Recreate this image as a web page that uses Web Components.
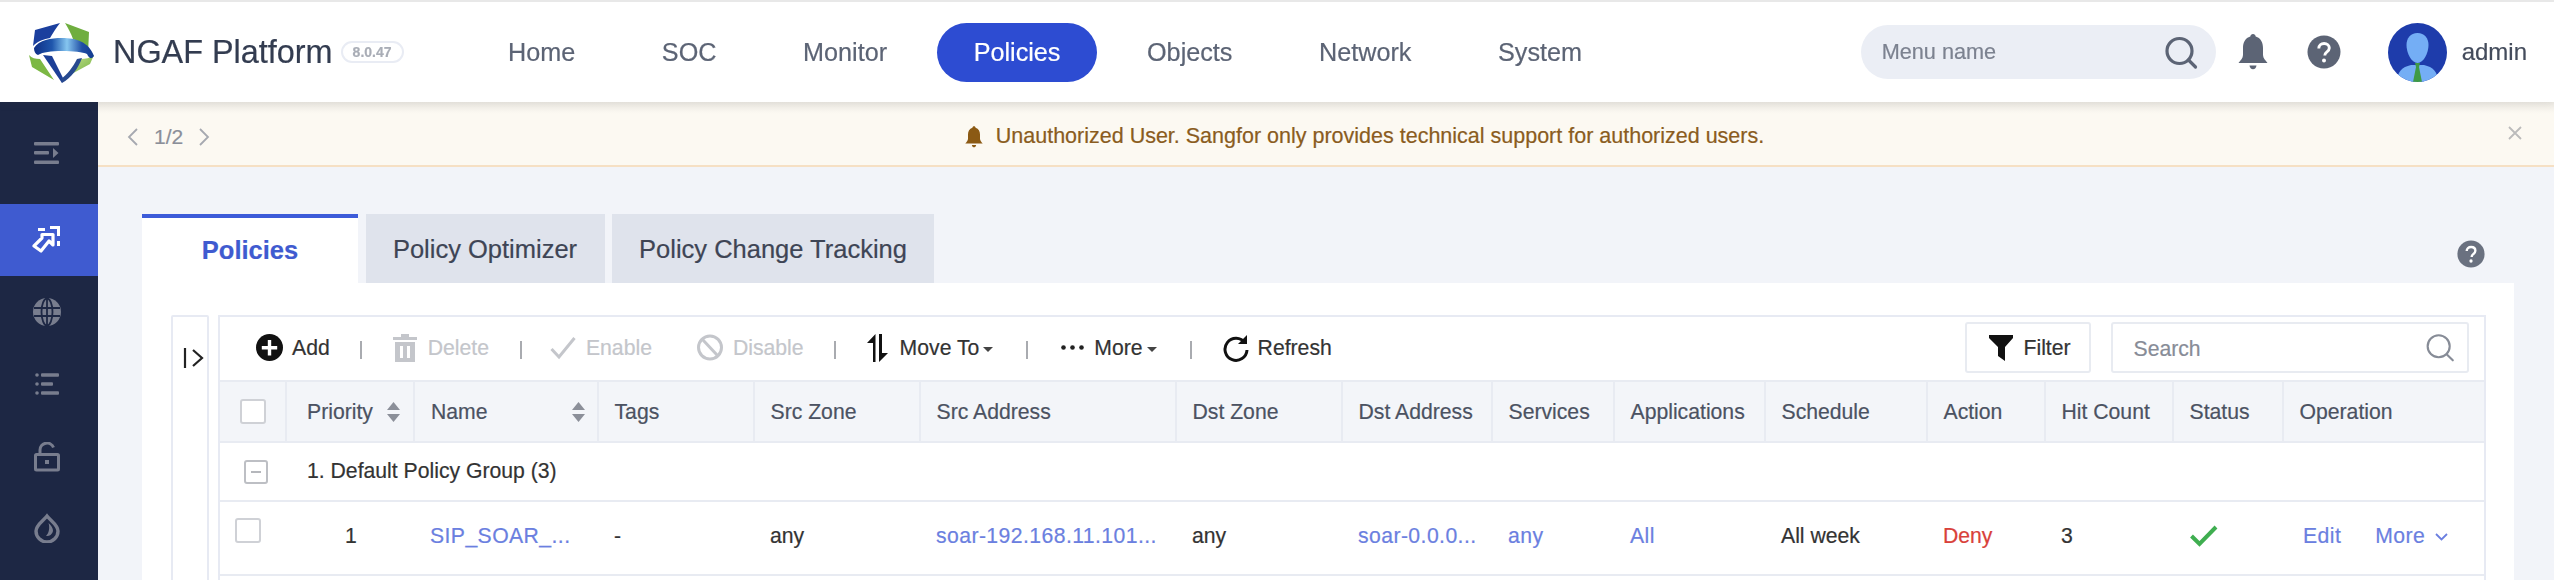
<!DOCTYPE html>
<html lang="en">
<head>
<meta charset="utf-8">
<title>NGAF Platform</title>
<style>
  html, body { margin: 0; height: 580px; overflow: hidden; background: #f2f4f9; }
  body { font-family: "Liberation Sans", Arial, sans-serif; color: #333; -webkit-text-stroke: .2px; }
  app-shell { height: 580px; filter: blur(.55px); }
</style>
</head>
<body>
<app-shell>
  <ngaf-header slot="top"></ngaf-header>
  <ngaf-sidebar slot="side"></ngaf-sidebar>
  <notice-bar>Unauthorized User. Sangfor only provides technical support for authorized users.</notice-bar>
  <tab-strip>
    <tab-item active>Policies</tab-item>
    <tab-item style="width:239px">Policy Optimizer</tab-item>
    <tab-item style="width:322px">Policy Change Tracking</tab-item>
  </tab-strip>
  <policy-panel>
    <policy-toolbar></policy-toolbar>
    <policy-table></policy-table>
  </policy-panel>
</app-shell>

<script>
// iconos compartidos
const icons = {
  search: (c, w) => `<svg width="34" height="34" viewBox="0 0 34 34" fill="none" stroke="${c}" stroke-width="${w}"><circle cx="15.5" cy="15" r="12.5"/><path d="M24.5 24l7 7" stroke-linecap="round"/></svg>`,
  help: (s, bg) => `<svg width="${s}" height="${s}" viewBox="0 0 34 34"><circle cx="17" cy="17" r="16.5" fill="${bg}"/><path d="M11.8 13.4c0-3 2.3-4.9 5.3-4.9s5.2 1.8 5.2 4.5c0 2-1.100 3.100-2.600 4.200-1.300 1-1.900 1.600-1.900 3.300" fill="none" stroke="#fff" stroke-width="2.900"/><circle cx="17" cy="25.500" r="2" fill="#fff"/></svg>`,
  bell: (w, h, c) => `<svg width="${w}" height="${h}" viewBox="0 0 30 36"><path fill="${c}" d="M15 0c1.500 0 2.500 1 2.700 2.600C22.600 4 25 8.500 25 14v7c0 3 2.500 5.500 4.500 8H.5c2-2.500 4.500-5 4.500-8v-7C5 8.500 7.400 4 12.300 2.600 12.500 1 13.500 0 15 0z"/><path fill="${c}" d="M11.500 31.500h7c-.3 2.300-1.600 3.800-3.500 3.800s-3.200-1.500-3.500-3.800z"/></svg>`
};

const shellTpl = document.createElement('template');
shellTpl.innerHTML = `
<style>
  :host { display: grid; grid-template-columns: 98px 1fr; grid-template-rows: 102px 1fr; }
  .top { grid-column: 1 / 3; position: relative; z-index: 2; }
  main { display: flex; flex-direction: column; min-width: 0; height: 478px; overflow: hidden; }
</style>
<div class="top"><slot name="top"></slot></div>
<slot name="side"></slot>
<main><slot></slot></main>`;
class AppShell extends HTMLElement {
  constructor() {
    super();
    this.attachShadow({ mode: 'open' }).appendChild(shellTpl.content.cloneNode(true));
  }
}

const headerTpl = document.createElement('template');
headerTpl.innerHTML = `
<style>
  :host { display: flex; align-items: center; box-sizing: border-box; height: 102px; background: #fff; border-top: 2px solid #e8e8e8; padding-left: 29px; box-shadow: 0 2px 8px rgba(60,60,50,.10); }
  .logo { width: 66px; height: 62px; margin-top: 2px; flex: none; }
  .brand { font-size: 32.400px; color: #333c50; margin-left: 18px; white-space: nowrap; }
  .ver { box-sizing: border-box; height: 22px; width: 63px; margin: 0 0 0 8px; border: 2px solid #e9ecf4; border-radius: 11px; font-size: 14px; line-height: 18px; font-weight: bold; color: #a9adb6; text-align: center; flex: none; }
  nav { display: flex; gap: 13.600px; margin-left: 68px; }
  nav a { height: 59px; line-height: 58px; padding: 0 36.5px; border-radius: 30px; font-size: 25.200px; color: #5c6475; white-space: nowrap; }
  nav a.on { background: #2d4cd2; color: #fff; }
  .find { box-sizing: border-box; display: flex; align-items: center; justify-content: space-between; width: 355px; height: 54px; margin-left: auto; padding: 0 18px 0 21px; border-radius: 27px; background: #ebeef5; font-size: 21.700px; color: #7c8290; }
  .find svg { margin-top: 2px; }
  .bell { margin-left: 22px; width: 30px; height: 36px; }
  .help { margin-left: 39px; width: 34px; height: 34px; }
  svg { display: block; }
  .avatar { margin-left: 47px; width: 59px; height: 59px; }
  .user { margin: 0 27px 0 15px; font-size: 24px; color: #444c5c; }
</style>
<svg class="logo" viewBox="0 0 66 62">
  <defs>
    <linearGradient id="band" x1="0" x2="1" y1="0" y2="0"><stop offset="0" stop-color="#0f2f86"/><stop offset=".3" stop-color="#1f56ac"/><stop offset=".55" stop-color="#86c6f0"/><stop offset=".8" stop-color="#1f4ea5"/><stop offset="1" stop-color="#123a90"/></linearGradient>
    <linearGradient id="lg" x1="0" x2="1" y1="0" y2="1"><stop offset="0" stop-color="#cfe69a"/><stop offset="1" stop-color="#6aad36"/></linearGradient>
  </defs>
  <path fill="#1b3f9e" d="M31 1 6 8 4 24c5-5 11-7 17-8 3-5 6-10 10-15z"/>
  <path fill="#6fae3f" d="M36 1l24 9-1 22c-3-7-9-12-15-15-2-6-5-11-8-16z"/>
  <path fill="#7cb844" d="M0 33l3 12 22 13L11 37c-5 0-8-1-11-4z"/>
  <path fill="url(#lg)" d="M37 55l24-13 4-9c-4 3-9 4-13 4-3 7-8 13-15 18z"/>
  <path fill="#1c3f96" d="M14 33l19 28 1-5-11-22z"/>
  <path fill="#27498f" d="M33 61l-1-4c6-4 12-12 16-20l5-1c-4 11-11 20-20 25z"/>
  <path fill="url(#band)" d="M5 26C10 18 22 16 33 16c14 0 27 4 32 18-3 4-5 2-7-2-4-2-14-3-25-3s-19 1-24 4c-3-1-4-4-4-7z"/>
</svg>
<span class="brand">NGAF Platform</span>
<span class="ver">8.0.47</span>
<nav><a>Home</a><a>SOC</a><a>Monitor</a><a class="on">Policies</a><a>Objects</a><a>Network</a><a>System</a></nav>
<div class="find"><span>Menu name</span>${icons.search('#5c6475', 3.2)}</div>
<div class="bell">${icons.bell(30, 36, '#5c6475')}</div>
<div class="help">${icons.help(34, '#5c6475')}</div>
<svg class="avatar" viewBox="0 0 59 59">
  <clipPath id="av"><circle cx="29.500" cy="29.500" r="29.500"/></clipPath>
  <g clip-path="url(#av)">
    <rect width="59" height="59" fill="#1e3cab"/>
    <path fill="#74aef5" d="M9 59c0-10 5-15 14-17h13c9 2 14 7 14 17z"/>
    <path fill="#74aef5" d="M29.500 10c7 0 11 5 11 12 0 8-5 18-11 18s-11-10-11-18c0-7 4-12 11-12z"/>
    <path fill="#3f9a45" d="M27 40h5l-1 4 3 15h-9l3-15z"/>
  </g>
</svg>
<span class="user">admin</span>`;
class NgafHeader extends HTMLElement {
  constructor() {
    super();
    this.attachShadow({ mode: 'open' }).appendChild(headerTpl.content.cloneNode(true));
  }
}

const sideTpl = document.createElement('template');
sideTpl.innerHTML = `
<style>
  :host { display: block; width: 98px; height: 478px; background: #1d2744; overflow: hidden; }
  .it { display: flex; align-items: center; justify-content: center; padding-right: 4px; box-sizing: border-box; color: #787d8e; }
  .it svg { display: block; }
  .on { background: #3f5bd0; color: #fff; }
</style>
<div class="it" style="height:102px"><svg width="28" height="24" viewBox="0 0 28 24" fill="currentColor"><rect x="1" y="1" width="25" height="3.500" rx="1"/><rect x="1" y="10" width="15" height="3.500" rx="1"/><path d="M20 7l5.500 5-5.500 5z"/><rect x="1" y="19.500" width="25" height="3.500" rx="1"/></svg></div>
<div class="it on" style="height:72px"><svg width="30" height="28" viewBox="0 0 30 28" fill="currentColor"><path d="M6 2h7v3H6zM18 0h10v10h-3V3h-7zM25 15h3v5h-3z"/><path fill="none" stroke="currentColor" stroke-width="3.200" stroke-linejoin="round" d="M10 8.500h11V19l-4-4-8 10-7-5 8-8z"/></svg></div>
<div class="it" style="height:72px"><svg width="30" height="30" viewBox="0 0 30 30"><circle cx="15" cy="15" r="14" fill="currentColor"/><g fill="none" stroke="#1d2744" stroke-width="1.800"><ellipse cx="15" cy="15" rx="5.500" ry="13.500"/><path d="M15 1v28M2 11h26M2 19h26"/></g></svg></div>
<div class="it" style="height:72px"><svg width="26" height="24" viewBox="0 0 26 24" fill="currentColor"><circle cx="3" cy="3" r="1.800"/><rect x="7" y="1.200" width="18" height="3.500" rx="1"/><circle cx="3" cy="12" r="1.800"/><rect x="7" y="10.200" width="12" height="3.500" rx="1"/><circle cx="3" cy="21" r="1.800"/><rect x="7" y="19.200" width="18" height="3.500" rx="1"/></svg></div>
<div class="it" style="height:74px"><svg width="26" height="30" viewBox="0 0 26 30" fill="none" stroke="currentColor" stroke-width="3"><path d="M6 12V8a7 7 0 0 1 13.500-2.500"/><rect x="1.500" y="12.500" width="23" height="15.500" rx="1"/><rect x="11" y="18" width="4" height="4" fill="currentColor" stroke="none"/></svg></div>
<div class="it" style="height:68px"><svg width="26" height="30" viewBox="0 0 26 30" fill="none" stroke="currentColor" stroke-width="3.400"><path d="M13 3c4 5 11 9 11 15a11 11 0 0 1-22 0C2 12 9 8 13 3z"/><path fill="currentColor" stroke="none" d="M14.500 10c3 3 4.500 5 4.500 8a6 6 0 0 1-7 5c3-3 4-8 2.500-13z"/></svg></div>`;
class NgafSidebar extends HTMLElement {
  constructor() {
    super();
    this.attachShadow({ mode: 'open' }).appendChild(sideTpl.content.cloneNode(true));
  }
}

const noticeTpl = document.createElement('template');
noticeTpl.innerHTML = `
<style>
  :host { display: flex; align-items: center; flex: none; box-sizing: border-box; height: 65px; padding: 6px 32px 0 29px; background: linear-gradient(#efece6, #fcf9f2 12px); border-bottom: 2px solid #f6e0c4; }
  .pager { display: flex; align-items: center; color: #8b8f99; font-size: 21px; flex: none; width: 83px; }
  .pager span { margin: 0 16px 0 16px; }
  svg { display: block; flex: none; }
  .msg { flex: 1; display: flex; align-items: center; justify-content: center; gap: 13px; color: #8a5c20; font-size: 21.500px; white-space: nowrap; padding-left: 11px; }
  .x { margin-top: -8px; }
</style>
<div class="pager">
  <svg width="11" height="18" viewBox="0 0 11 18" fill="none" stroke="#a6a9b0" stroke-width="1.800"><path d="M10 1 2 9l8 8"/></svg>
  <span>1/2</span>
  <svg width="11" height="18" viewBox="0 0 11 18" fill="none" stroke="#a6a9b0" stroke-width="1.800"><path d="M1 1l8 8-8 8"/></svg>
</div>
<div class="msg">${icons.bell(18, 22, '#8b5a14')}<span><slot></slot></span></div>
<svg class="x" width="14" height="14" viewBox="0 0 14 14" fill="none" stroke="#bbb" stroke-width="1.800"><path d="M1 1l12 12M13 1 1 13"/></svg>`;
class NoticeBar extends HTMLElement {
  constructor() {
    super();
    this.attachShadow({ mode: 'open' }).appendChild(noticeTpl.content.cloneNode(true));
  }
}

const stripTpl = document.createElement('template');
stripTpl.innerHTML = `
<style>
  :host { display: flex; flex: none; height: 69px; gap: 7.500px; margin: 47px 69px 0 44px; }
  .help { margin: 26px 0 0 auto; }
</style>
<slot></slot>
<div class="help">${icons.help(28, '#6a7180')}</div>`;
class TabStrip extends HTMLElement {
  constructor() {
    super();
    this.attachShadow({ mode: 'open' }).appendChild(stripTpl.content.cloneNode(true));
  }
}

const tabTpl = document.createElement('template');
tabTpl.innerHTML = `
<style>
  :host { display: flex; align-items: center; justify-content: center; box-sizing: border-box; width: 216px; height: 69px; padding-top: 1px; background: #dfe3ec; font-size: 25.500px; color: #3e4555; white-space: nowrap; }
  :host([active]) { background: #fff; color: #3f5bd0; border-top: 4px solid #3d5bd9; padding-top: 0; font-weight: bold; }
</style>
<slot></slot>`;
class TabItem extends HTMLElement {
  constructor() {
    super();
    this.attachShadow({ mode: 'open' }).appendChild(tabTpl.content.cloneNode(true));
  }
}

const panelTpl = document.createElement('template');
panelTpl.innerHTML = `
<style>
  :host { display: flex; flex: 1; gap: 9px; margin: 0 40px 0 44px; padding: 32px 28.500px 0 29px; background: #fff; min-height: 0; }
  .drawer { box-sizing: border-box; width: 38px; height: 300px; flex: none; border: 2px solid #e7eaf3; border-radius: 2px; padding: 30px 0 0 10px; }
  .box { flex: 1; min-width: 0; height: 300px; box-sizing: border-box; border: 2px solid #e7eaf3; }
  svg { display: block; }
</style>
<div class="drawer"><svg width="22" height="22" viewBox="0 0 22 22" fill="none" stroke="#222" stroke-width="2.200"><path d="M2 1v20M10 3l9 8-9 8"/></svg></div>
<div class="box"><slot></slot></div>`;
class PolicyPanel extends HTMLElement {
  constructor() {
    super();
    this.attachShadow({ mode: 'open' }).appendChild(panelTpl.content.cloneNode(true));
  }
}

const toolTpl = document.createElement('template');
const caret = `<svg class="caret" width="10" height="5" viewBox="0 0 10 5" fill="#444"><path d="M0 0h10L5 5z"/></svg>`;
toolTpl.innerHTML = `
<style>
  :host { display: flex; align-items: center; box-sizing: border-box; height: 63px; padding: 0 15px 2px 36px; font-size: 21.200px; color: #333; white-space: nowrap; }
  .tool { display: flex; align-items: center; height: 28px; }
  .tool svg { display: block; flex: none; }
  .tool span { margin-left: 10px; }
  .off { color: #c4c6cb; }
  .caret { margin-left: 4px; margin-top: 4px; }
  i { display: block; width: 2px; height: 18px; background: #a9abb0; flex: none; margin-top: 4px; }
  .btn { box-sizing: border-box; display: flex; align-items: center; gap: 11px; height: 51px; width: 126px; padding-left: 22px; margin-left: auto; border: 2px solid #e8ebf1; border-radius: 3px; }
  .btn svg { display: block; }
  .input { box-sizing: border-box; display: flex; align-items: center; justify-content: space-between; height: 51px; width: 358px; margin-left: 20px; padding: 0 12px 0 21px; border: 2px solid #e8ebf1; border-radius: 3px; color: #878c97; }
  .input span { margin-top: 3px; }
</style>
<div class="tool"><svg width="27" height="27" viewBox="0 0 27 27"><circle cx="13.500" cy="13.500" r="13.500" fill="#111"/><path d="M11.800 6h3.400v6h6v3.400h-6v6h-3.400v-6h-6v-3.400h6z" fill="#fff"/></svg><span style="margin-left:9px">Add</span></div>
<i style="margin-left:30px"></i>
<div class="tool off" style="margin-left:31px"><svg width="24" height="28" viewBox="0 0 24 28" fill="currentColor"><path d="M8 0h8v3h8v3H0V3h8zM2 8h20v20H2zm5 4v12h3V12zm7 0v12h3V12z" fill-rule="evenodd"/></svg><span style="margin-left:11px">Delete</span></div>
<i style="margin-left:31px"></i>
<div class="tool off" style="margin-left:28px"><svg width="26" height="24" viewBox="0 0 26 24" fill="none" stroke="currentColor" stroke-width="3"><path d="M1.500 13l7.500 8L24.500 2"/></svg><span>Enable</span></div>
<div class="tool off" style="margin-left:45px"><svg width="26" height="27" viewBox="0 0 26 27" fill="none" stroke="currentColor" stroke-width="3"><circle cx="13" cy="13.500" r="11.500"/><path d="M5 5l16 17"/></svg><span>Disable</span></div>
<i style="margin-left:30px"></i>
<div class="tool" style="margin-left:31px"><svg width="21" height="28" viewBox="0 0 21 28" fill="#111"><path d="M8.500 0v28H6V9H0zM12 0h3v19h6l-9 9z"/></svg><span style="margin-left:12px">Move To</span>${caret}</div>
<i style="margin-left:33px"></i>
<div class="tool" style="margin-left:33px"><svg width="23" height="5" viewBox="0 0 23 5" fill="#222"><circle cx="2.500" cy="2.500" r="2.300"/><circle cx="11.500" cy="2.500" r="2.300"/><circle cx="20.500" cy="2.500" r="2.300"/></svg><span>More</span>${caret}</div>
<i style="margin-left:33px"></i>
<div class="tool" style="margin-left:31px"><svg width="26" height="28" viewBox="0 0 26 28" fill="none" stroke="#111" stroke-width="3"><path d="M22 9a11 11 0 1 0 2 7"/><path d="M24 1v9h-9" fill="#111" stroke="none"/></svg><span style="margin-left:9px">Refresh</span></div>
<div class="btn"><svg width="24" height="26" viewBox="0 0 24 26" fill="#111"><path d="M0 0h24v3l-8 9v14l-7-5V12L0 3z"/></svg><span>Filter</span></div>
<div class="input"><span>Search</span>${icons.search('#878c97', 2.400).replace('width="34" height="34"', 'width="30" height="30"')}</div>`;
class PolicyToolbar extends HTMLElement {
  constructor() {
    super();
    this.attachShadow({ mode: 'open' }).appendChild(toolTpl.content.cloneNode(true));
  }
}

const columns = ['Priority', 'Name', 'Tags', 'Src Zone', 'Src Address', 'Dst Zone', 'Dst Address', 'Services', 'Applications', 'Schedule', 'Action', 'Hit Count', 'Status', 'Operation'];
const sortArrows = `<svg width="13" height="22" viewBox="0 0 13 22" fill="#8b8f99"><path d="M6.500 1 13 9H0zM6.500 21 0 13h13z"/></svg>`;

const tableTpl = document.createElement('template');
tableTpl.innerHTML = `
<style>
  :host { display: block; font-size: 21.200px; color: #333; white-space: nowrap; }
  .row { display: grid; grid-template-columns: 67px 128px 184px 156px 166px 256px 166px 150px 122px 151px 162px 118px 128px 110px 1fr; border-top: 2px solid #e8ebf2; align-items: center; }
  .head { height: 59px; background: #f3f5f9; color: #4b5262; align-items: stretch; }
  .head > div { display: flex; align-items: center; padding-left: 15.500px; border-left: 2px solid #e8ebf2; margin-left: -2px; min-width: 0; }
  .head > div:first-child { border-left: 0; margin-left: 0; padding-left: 20px; }
  .head > div:nth-child(2) { padding-left: 20px; justify-content: space-between; padding-right: 15px; }
  .head > div:nth-child(3) { justify-content: space-between; padding-right: 14px; padding-left: 16px; }
  .group { height: 57px; display: flex; align-items: center; padding-left: 24px; }
  .group span { margin-left: 39px; margin-top: -2px; }
  .body { height: 72px; padding-bottom: 0; }
  .body > div { padding-left: 15px; margin-top: -5px; }
  .link { color: #6b7fe0; letter-spacing: .42px; }
  .cb { box-sizing: border-box; width: 26px; height: 25px; border: 2px solid #cfd1d6; border-radius: 3px; background: #fff; }
  .minus { border-color: #bdbfc4; width: 24px; height: 24px; display: flex; align-items: center; justify-content: center; }
  .minus::after { content: ""; width: 10px; height: 2px; background: #b5b7bc; }
  svg { display: block; }
</style>
<div class="row head" id="head"></div>
<div class="row group" style="display:flex"><div class="cb minus"></div><span>1. Default Policy Group (3)</span></div>
<div class="row body" id="body"></div>
<div class="row" style="height:2px"></div>`;

class PolicyTable extends HTMLElement {
  constructor() {
    super();
    this.attachShadow({ mode: 'open' }).appendChild(tableTpl.content.cloneNode(true));
  }

  connectedCallback() {
    const head = this.shadowRoot.querySelector('#head');
    head.innerHTML = `<div style="padding-left:20px"><div class="cb"></div></div>` + columns.map((name, i) =>
      `<div><span>${name}</span>${i < 2 ? sortArrows : ''}</div>`).join('');

    const body = this.shadowRoot.querySelector('#body');
    const cells = [
      '<div class="cb" style="margin-top:-11px"></div>',
      '<span style="display:block;text-align:center;margin-left:-15px">1</span>',
      '<span class="link">SIP_SOAR_...</span>',
      '-',
      'any',
      '<span class="link">soar-192.168.11.101...</span>',
      'any',
      '<span class="link">soar-0.0.0...</span>',
      '<span class="link">any</span>',
      '<span class="link">All</span>',
      'All week',
      '<span style="color:#d9413a">Deny</span>',
      '3',
      `<svg width="28" height="22" viewBox="0 0 28 22" fill="none" stroke="#3fae50" stroke-width="4" style="margin-left:1px"><path d="M1.500 11l8 8L26 2"/></svg>`,
      `<span class="link" style="display:flex;align-items:center;margin-left:4px">Edit<span style="margin-left:34px">More</span><svg style="margin:3px 0 0 10px" width="13" height="8" viewBox="0 0 13 8" fill="none" stroke="#6b7fe0" stroke-width="1.800"><path d="M1 1l5.500 5.500L12 1"/></svg></span>`
    ];
    body.innerHTML = cells.map(c => `<div>${c}</div>`).join('');
  }
}

customElements.define('app-shell', AppShell);
customElements.define('ngaf-header', NgafHeader);
customElements.define('ngaf-sidebar', NgafSidebar);
customElements.define('notice-bar', NoticeBar);
customElements.define('tab-strip', TabStrip);
customElements.define('tab-item', TabItem);
customElements.define('policy-panel', PolicyPanel);
customElements.define('policy-toolbar', PolicyToolbar);
customElements.define('policy-table', PolicyTable);
</script>
</body>
</html>
